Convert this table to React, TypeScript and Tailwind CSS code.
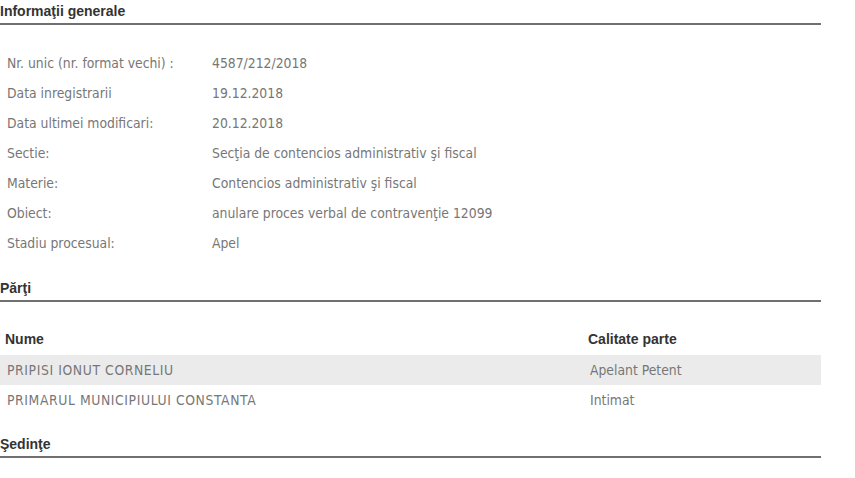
import React from "react";

const info = [
  ["Nr. unic (nr. format vechi) :", "4587/212/2018"],
  ["Data inregistrarii", "19.12.2018"],
  ["Data ultimei modificari:", "20.12.2018"],
  ["Sectie:", "Secţia de contencios administrativ şi fiscal"],
  ["Materie:", "Contencios administrativ şi fiscal"],
  ["Obiect:", "anulare proces verbal de contravenţie 12099"],
  ["Stadiu procesual:", "Apel"],
];

const parti = [
  ["PRIPISI IONUT CORNELIU", "Apelant Petent"],
  ["PRIMARUL MUNICIPIULUI CONSTANTA", "Intimat"],
];

const Heading = ({ children }: { children: React.ReactNode }) => (
  <div className="border-b-2 border-[#707070] h-[25px] flex items-start pt-[3px]">
    <h3 className="font-['Liberation_Sans',Arial,sans-serif] font-bold text-[14px] leading-[16px] text-[#333]">
      {children}
    </h3>
  </div>
);

export default function App() {
  return (
    <div className="w-[855px] h-[478px] bg-white overflow-hidden">
      <div className="w-[821px] font-['DejaVu_Sans_Condensed','DejaVu_Sans',sans-serif] text-[13.8px] text-[#777]">
        <Heading>Informaţii generale</Heading>

        <div className="pt-[23px] pb-[19px]">
          {info.map(([label, value]) => (
            <div key={label} className="flex h-[30px] items-center">
              <div className="w-[212px] pl-[7px]">{label}</div>
              <div>{value}</div>
            </div>
          ))}
        </div>

        <Heading>Părţi</Heading>

        <div className="pt-[21px] pb-[18px]">
          <div className="flex h-[32px] items-center font-['Liberation_Sans',Arial,sans-serif] font-bold text-[14px] text-[#333]">
            <div className="w-[588px] pl-[5px]">Nume</div>
            <div>Calitate parte</div>
          </div>
          {parti.map(([name, role], i) => (
            <div
              key={name}
              className={`flex h-[30px] items-center ${i === 0 ? "bg-[#ebebeb]" : ""}`}
            >
              <div className="w-[590px] pl-[7px] tracking-[0.6px]">{name}</div>
              <div>{role}</div>
            </div>
          ))}
        </div>

        <Heading>Şedinţe</Heading>
      </div>
    </div>
  );
}
